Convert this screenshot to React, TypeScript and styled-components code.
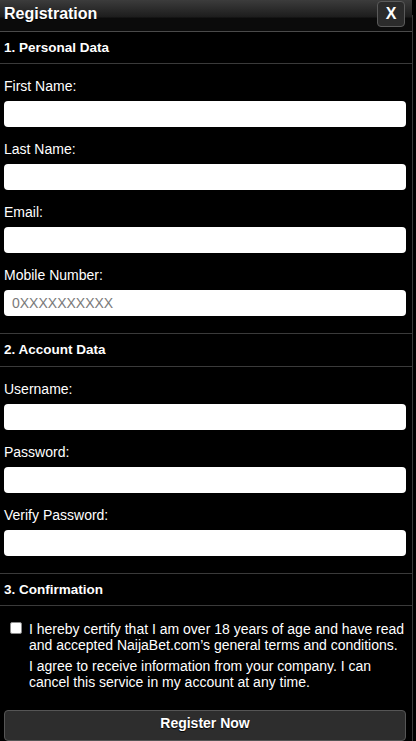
import styled, { createGlobalStyle } from 'styled-components';

const GlobalStyle = createGlobalStyle`
  html, body {
    margin: 0;
    padding: 0;
    background: #000;
  }
  body {
    font-family: "Liberation Sans", Arial, sans-serif;
    color: #fff;
  }
`;

const Page = styled.div`
  display: flex;
  flex-direction: row;
  width: 416px;
  height: 741px;
  overflow: hidden;
  background: #000;
`;

const Panel = styled.div`
  display: flex;
  flex-direction: column;
  width: 412px;
  flex-shrink: 0;
`;

const Gutter = styled.div`
  flex: 1;
  margin-top: 15px;
  border-left: 1px solid #3a3a3a;
`;

const Header = styled.div`
  display: flex;
  flex-direction: row;
  align-items: center;
  justify-content: space-between;
  height: 32px;
  padding: 0 7px 0 4px;
  background: linear-gradient(#3c3c3c 0%, #1c1c1c 56%, #0b0b0b 57%, #0b0b0b 100%);
  border-bottom: 1px solid #4a4a4a;

  > h1 {
    margin: 0;
    margin-top: -4px;
    font-size: 16px;
    font-weight: 700;
    color: #fff;
    text-shadow: 0 1px 0 #000;
  }
`;

const CloseButton = styled.button`
  display: flex;
  align-items: center;
  justify-content: center;
  width: 28px;
  height: 26px;
  margin-top: -4px;
  padding: 0;
  background: #2b2b2b;
  border: 1px solid #5a5a5a;
  border-radius: 4px;
  color: #fff;
  font-family: "Liberation Sans", Arial, sans-serif;
  font-size: 16px;
  font-weight: 700;
`;

const SectionTitle = styled.div`
  display: flex;
  align-items: center;
  height: 32px;
  padding: 0 4px;
  border-bottom: 1px solid #3a3a3a;
  font-size: 13.5px;
  font-weight: 700;
  color: #fff;
`;

const Fields = styled.div`
  display: flex;
  flex-direction: column;
  gap: 14px;
  padding: 14px 6px 17px 4px;
  border-bottom: 1px solid #3a3a3a;
`;

const Field = styled.label`
  display: flex;
  flex-direction: column;
  gap: 7px;

  > span {
    font-size: 14px;
    line-height: 16px;
    color: #fff;
  }
`;

const Input = styled.input`
  box-sizing: border-box;
  width: 100%;
  height: 26px;
  padding: 0 8px;
  border: none;
  border-radius: 4px;
  background: #fff;
  font-family: "Liberation Sans", Arial, sans-serif;
  font-size: 14px;
  color: #222;
  outline: none;

  &::placeholder {
    color: #7a7a7a;
  }
`;

const Confirm = styled.div`
  display: flex;
  flex-direction: column;
  gap: 5px;
  position: relative;
  padding: 15px 6px 0 29px;

  > p {
    margin: 0;
    font-size: 14px;
    line-height: 16px;
    color: #fff;
  }
`;

const Check = styled.input`
  position: absolute;
  left: 10px;
  top: 16px;
  width: 12px;
  height: 12px;
  margin: 0;
  appearance: none;
  background: #fff;
  border: 1px solid #8a8a8a;
  border-radius: 2px;
`;

const SubmitButton = styled.button`
  box-sizing: border-box;
  margin: 20px 6px 0 4px;
  height: 32px;
  padding: 0 0 4px;
  background: #2d2d2d;
  border: 1px solid #555;
  border-radius: 4px;
  color: #fff;
  font-family: "Liberation Sans", Arial, sans-serif;
  font-size: 14px;
  font-weight: 700;
  text-shadow: 0 1px 1px #000;
`;

const personal = [
  { label: 'First Name:' },
  { label: 'Last Name:' },
  { label: 'Email:' },
  { label: 'Mobile Number:', placeholder: '0XXXXXXXXXX' },
];

const account = [
  { label: 'Username:', type: 'text' },
  { label: 'Password:', type: 'password' },
  { label: 'Verify Password:', type: 'password' },
];

export default function App() {
  return (
    <>
      <GlobalStyle />
      <Page>
        <Panel>
          <Header>
            <h1>Registration</h1>
            <CloseButton>X</CloseButton>
          </Header>

          <SectionTitle>1. Personal Data</SectionTitle>
          <Fields>
            {personal.map((f) => (
              <Field key={f.label}>
                <span>{f.label}</span>
                <Input type="text" placeholder={f.placeholder} />
              </Field>
            ))}
          </Fields>

          <SectionTitle>2. Account Data</SectionTitle>
          <Fields>
            {account.map((f) => (
              <Field key={f.label}>
                <span>{f.label}</span>
                <Input type={f.type} />
              </Field>
            ))}
          </Fields>

          <SectionTitle>3. Confirmation</SectionTitle>
          <Confirm>
            <Check type="checkbox" />
            <p>I hereby certify that I am over 18 years of age and have read and accepted NaijaBet.com’s general terms and conditions.</p>
            <p>I agree to receive information from your company. I can cancel this service in my account at any time.</p>
          </Confirm>
          <SubmitButton>Register Now</SubmitButton>
        </Panel>
        <Gutter />
      </Page>
    </>
  );
}
